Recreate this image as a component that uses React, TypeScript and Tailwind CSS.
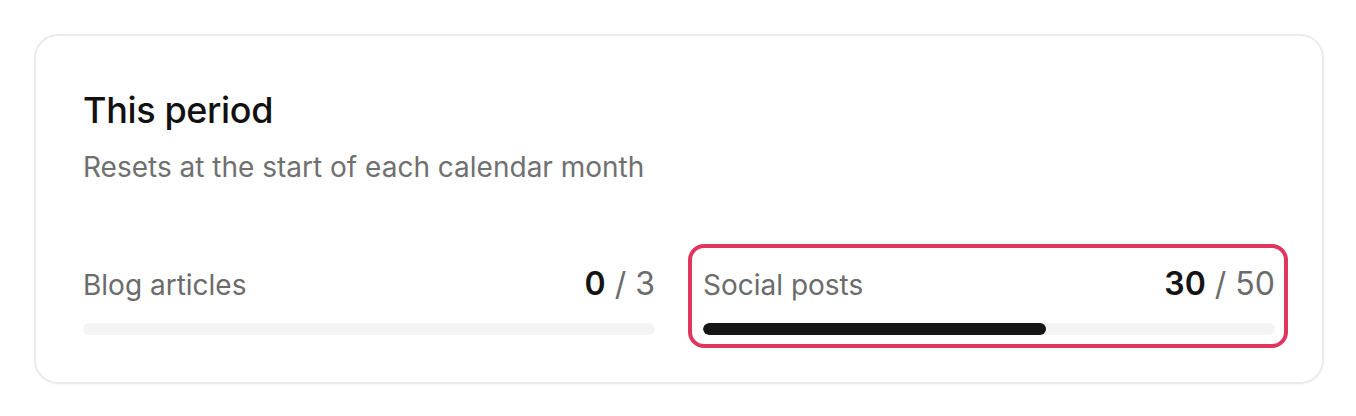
import React from "react";

function Meter({ label, used, total, highlight }: { label: string; used: number; total: number; highlight?: boolean }) {
  const pct = (used / total) * 100;
  return (
    <div className="relative">
      {highlight && (
        <div className="absolute -left-[15px] -right-[13px] -top-[20px] -bottom-[13px] rounded-[16px] border-[4px] border-[#e0365e] pointer-events-none" />
      )}
      <div className="flex items-baseline justify-between leading-[40px]">
        <span className="text-[28px] text-[#6b6b6b]">{label}</span>
        <span className="text-[32px] text-[#6b6b6b]">
          <span className="font-semibold text-[#141414]">{used}</span> / {total}
        </span>
      </div>
      <div className="mt-[18px] h-[12px] w-full rounded-full bg-[#f4f4f4] overflow-hidden">
        <div className="h-full rounded-full bg-[#161616]" style={{ width: `${pct}%` }} />
      </div>
    </div>
  );
}

export default function App() {
  return (
    <div className="bg-white w-[1356px] h-[416px] pl-[34px] pr-[32px] pt-[34px]" style={{ fontFamily: "Inter, 'Noto Sans', sans-serif" }}>
      <div className="rounded-[24px] border-2 border-[#ebebeb] bg-white px-[47px] pt-[52px] pb-[47px] shadow-[0_1px_3px_rgba(0,0,0,0.03)]">
        <h2 className="text-[36px] font-medium leading-[44px] text-[#111111] tracking-[-0.01em]">This period</h2>
        <p className="mt-[17px] text-[28px] leading-[36px] text-[#707070]">Resets at the start of each calendar month</p>
        <div className="mt-[79px] grid grid-cols-2 gap-[48px]">
          <Meter label="Blog articles" used={0} total={3} />
          <Meter label="Social posts" used={30} total={50} highlight />
        </div>
      </div>
    </div>
  );
}
